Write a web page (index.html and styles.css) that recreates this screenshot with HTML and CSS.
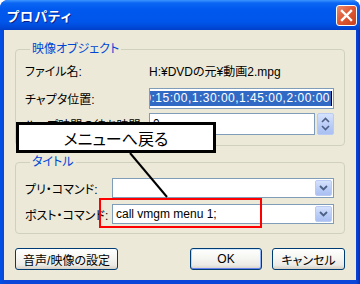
FILE: index.html
```html
<!DOCTYPE html>
<html lang="ja">
<head>
    <meta charset="UTF-8">
    <meta name="viewport" content="width=device-width, initial-scale=1.0">
    <title>プロパティ</title>
    <link rel="stylesheet" href="styles.css">
</head>
<body>
    <div class="window">
        <div class="titlebar">
            <span class="title">プロパティ</span>
            <span class="close">
                <svg width="13" height="13" viewBox="0 0 13 13">
                    <path d="M2 2 L11 11 M11 2 L2 11" stroke="#fff" stroke-width="2.4" stroke-linecap="square"/>
                </svg>
            </span>
        </div>

        <div class="client">
            <fieldset class="group group-video">
                <legend>映像オブジェクト</legend>
                <div class="row row-file">
                    <span class="label">ファイル名:</span>
                    <span class="value">H:¥DVDの元¥動画2.mpg</span>
                </div>
                <div class="row row-chapter">
                    <span class="label">チャプタ位置:</span>
                    <div class="field field-selected">
                        <span class="selection">0:15:00,1:30:00,1:45:00,2:00:00</span>
                        <span class="caret"></span>
                    </div>
                </div>
                <div class="row row-loop">
                    <span class="label">ループ時間の待ち時間:</span>
                    <div class="spin">
                        <div class="field">0</div>
                        <span class="spin-btn">
                            <svg width="9" height="14" viewBox="0 0 9 14">
                                <path d="M1 5 L4.5 1.5 L8 5 M1 9 L4.5 12.5 L8 9" fill="none" stroke="#4d6185" stroke-width="1.6"/>
                            </svg>
                        </span>
                    </div>
                </div>
            </fieldset>

            <fieldset class="group group-title">
                <legend>タイトル</legend>
                <div class="row">
                    <span class="label">プリ・コマンド:</span>
                    <div class="combo">
                        <span class="combo-text"></span>
                        <span class="drop-btn">
                            <svg width="9" height="6" viewBox="0 0 9 6">
                                <path d="M1 1 L4.5 4.5 L8 1" fill="none" stroke="#4d6185" stroke-width="1.8"/>
                            </svg>
                        </span>
                    </div>
                </div>
                <div class="row">
                    <span class="label">ポスト・コマンド:</span>
                    <div class="combo">
                        <span class="combo-text">call vmgm menu 1;</span>
                        <span class="drop-btn">
                            <svg width="9" height="6" viewBox="0 0 9 6">
                                <path d="M1 1 L4.5 4.5 L8 1" fill="none" stroke="#4d6185" stroke-width="1.8"/>
                            </svg>
                        </span>
                    </div>
                </div>
            </fieldset>

            <div class="buttons">
                <button class="btn btn-wide">音声/映像の設定</button>
                <div class="btn-group">
                    <button class="btn btn-default">OK</button>
                    <button class="btn">キャンセル</button>
                </div>
            </div>
        </div>

        <!-- annotations drawn over the dialog -->
        <div class="callout">メニューへ戻る</div>
        <svg class="pointer" width="360" height="284" viewBox="0 0 360 284">
            <line x1="130" y1="153" x2="167" y2="197" stroke="#000" stroke-width="2"/>
        </svg>
        <div class="highlight"></div>
    </div>
</body>
</html>
```

FILE: styles.css
```css
* {
    box-sizing: border-box;
}

body {
    margin: 0;
    background: #fff;
    font-family: "Liberation Sans", "Noto Sans CJK JP", sans-serif;
    font-size: 12px;
    font-feature-settings: "palt";
    color: #000;
}

.window {
    position: relative;
    width: 360px;
    height: 284px;
    display: flex;
    flex-direction: column;
    background: linear-gradient(90deg, #0050e6 0, #0a46d8 4px, #0a46d8 356px, #0030b8 360px);
    border-radius: 8px 8px 0 0;
    overflow: hidden;
}

.titlebar {
    height: 30px;
    flex: none;
    display: flex;
    align-items: center;
    justify-content: space-between;
    padding: 1px 3px 0 7px;
    background: linear-gradient(#3d95ff 0, #0a66f2 3px, #0058ee 10px, #0056ea 22px, #0049d8 27px, #0040c8 30px);
}

.title {
    color: #fff;
    font-weight: bold;
    font-size: 13px;
    text-shadow: 1px 1px 0 #0a1e8c;
    letter-spacing: 1px;
}

.close {
    width: 21px;
    height: 21px;
    display: flex;
    align-items: center;
    justify-content: center;
    border: 1px solid #fff;
    border-radius: 3px;
    background: linear-gradient(135deg, #e98a6c 0, #e05a36 45%, #c8401c 100%);
}

.client {
    flex: 1;
    margin: 0 4px 4px;
    padding: 12px 11px 0;
    background: #ece9d8;
}

.group {
    margin: 0;
    padding: 4px 10px 10px 9px;
    border: 1px solid #d0d0bf;
    border-radius: 4px;
}

.group legend {
    height: 14px;
    line-height: 14px;
    padding: 0 2px;
    margin-left: 5px;
    color: #0046d5;
}

.row {
    display: grid;
    align-items: center;
}

.group-video .row {
    grid-template-columns: 124px 1fr;
}

.row-file {
    height: 21px;
    margin-bottom: 7px;
}

.row-chapter {
    height: 21px;
    margin-bottom: 4px;
}

.row-loop {
    height: 22px;
}

.label {
    white-space: nowrap;
}

.field {
    height: 100%;
    border: 1px solid #7f9db9;
    background: #fff;
    padding: 3px 3px;
    line-height: 14px;
    overflow: hidden;
}

.field-selected {
    display: flex;
    justify-content: flex-end;
    align-items: stretch;
    padding: 2px 1px;
    white-space: nowrap;
}

.selection {
    background: #316ac5;
    color: #fff;
    line-height: 15px;
    letter-spacing: 0.5px;
    padding-right: 1px;
}

.caret {
    width: 1px;
    flex: none;
    background: #000;
}

.spin {
    display: flex;
    gap: 2px;
    height: 100%;
}

.spin .field {
    flex: 1;
}

.spin-btn,
.drop-btn {
    width: 17px;
    flex: none;
    display: flex;
    align-items: center;
    justify-content: center;
    border: 1px solid #b9cbf3;
    border-radius: 2px;
    background: linear-gradient(#d6e2fd, #b7cbf6 60%, #aac0f2);
}

.group-title {
    margin-top: 9px;
    padding-top: 9px;
    padding-bottom: 9px;
}

.group-title .row {
    grid-template-columns: 87px 1fr;
    height: 20px;
}

.group-title .row + .row {
    margin-top: 6px;
}

.combo {
    height: 100%;
    display: flex;
    border: 1px solid #7f9db9;
    background: #fff;
    padding: 1px;
}

.combo-text {
    flex: 1;
    line-height: 16px;
    padding-left: 2px;
    white-space: nowrap;
}

.buttons {
    display: flex;
    justify-content: space-between;
    margin-top: 14px;
}

.btn-group {
    display: flex;
    gap: 10px;
}

.btn {
    height: 22px;
    width: 73px;
    padding: 0;
    font: inherit;
    font-feature-settings: "palt";
    color: #000;
    border: 1px solid #003c74;
    border-radius: 3px;
    background: linear-gradient(#ffffff 0, #f4f4f0 50%, #ecebe6 80%, #d6d0c5 100%);
}

.btn-wide {
    width: 103px;
}

.btn-default {
    width: 72px;
    box-shadow: inset 0 1px 0 #cee7ff, inset 0 -1px 0 #6982ee, inset 1px 0 0 #b8d4fe, inset -1px 0 0 #8cb0f8;
}

.callout {
    position: absolute;
    left: 16px;
    top: 122px;
    width: 200px;
    height: 31px;
    border: 3px solid #000;
    background: #fff;
    display: flex;
    align-items: center;
    justify-content: center;
    font-size: 16px;
}

.pointer {
    position: absolute;
    left: 0;
    top: 0;
    pointer-events: none;
}

.highlight {
    position: absolute;
    left: 99px;
    top: 198px;
    width: 163px;
    height: 30px;
    border: 2px solid #ff0000;
}
```
